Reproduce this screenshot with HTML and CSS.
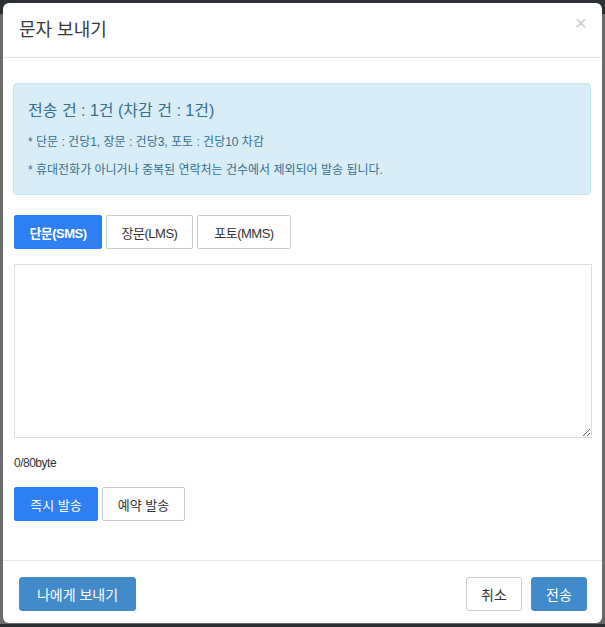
FILE: index.html
```html
<!DOCTYPE html>
<html lang="ko">
<head>
  <meta charset="UTF-8">
  <meta name="viewport" content="width=device-width, initial-scale=1.0">
  <title>문자 보내기</title>
  <link rel="stylesheet" href="styles.css">
</head>
<body>
  <div class="modal">
    <div class="modal-header">
      <h4 class="modal-title">문자 보내기</h4>
      <button type="button" class="close">&times;</button>
    </div>

    <div class="modal-body">
      <div class="alert">
        <p class="alert-title">전송 건 : 1건 (차감 건 : 1건)</p>
        <p>* 단문 : 건당1, 장문 : 건당3, 포토 : 건당10 차감</p>
        <p>* 휴대전화가 아니거나 중복된 연락처는 건수에서 제외되어 발송 됩니다.</p>
      </div>

      <div class="tabs">
        <button type="button" class="btn btn-tab active">단문(SMS)</button>
        <button type="button" class="btn btn-tab">장문(LMS)</button>
        <button type="button" class="btn btn-tab">포토(MMS)</button>
      </div>

      <textarea id="message"></textarea>
      <div class="counter"><span id="bytes">0</span>/80byte</div>

      <div class="send-type">
        <button type="button" class="btn btn-blue">즉시 발송</button>
        <button type="button" class="btn btn-white">예약 발송</button>
      </div>
    </div>

    <div class="modal-footer">
      <button type="button" class="btn btn-primary btn-me">나에게 보내기</button>
      <div class="footer-right">
        <button type="button" class="btn btn-default">취소</button>
        <button type="button" class="btn btn-primary">전송</button>
      </div>
    </div>
  </div>

  <script>
    // count bytes of message (korean = 2 bytes)
    document.getElementById('message').addEventListener('keyup', function() {
      let bytes = 0;
      for (let i = 0; i < this.value.length; i++) {
        bytes += this.value.charCodeAt(i) > 127 ? 2 : 1;
      }
      document.getElementById('bytes').textContent = bytes;
    });
  </script>
</body>
</html>
```

FILE: styles.css
```css
/* Modal page */
body {
  margin: 0;
  padding: 3px 3px 0 3px;
  font-family: "Liberation Sans", "Noto Sans CJK KR", sans-serif;
  font-size: 12px;
  color: #333;
  background: linear-gradient(#2c3035 0, #2c3035 14px, #6b6b6b 14px);
  min-height: 624px;
  box-sizing: border-box;
}
.modal {
  background-color: #fff;
  border-radius: 6px;
  height: 620px;
  display: flex;
  flex-direction: column;
}
.modal-header {
  display: flex;
  justify-content: space-between;
  align-items: flex-start;
  padding: 15px 15px 15px 16px;
  height: 24px;
  border-bottom: 1px solid #e5e5e5;
}
.modal-title {
  margin: 0;
  font-size: 18px;
  font-weight: normal;
  line-height: 24px;
  color: #3a3a3a;
}
.close {
  border: none;
  background: none;
  padding: 0;
  margin-top: -7px;
  font-size: 21px;
  line-height: 24px;
  color: #ccc;
  cursor: pointer;
  font-family: "Liberation Sans", sans-serif;
}
.modal-body {
  flex: 1;
  padding: 25px 11px 0 10px;
}
.alert {
  background-color: #d9edf7;
  border: 1px solid #bce8f1;
  border-radius: 4px;
  color: #31708f;
  padding: 16px 14px 10px 14px;
}
.alert p {
  margin: 0;
  font-size: 12px;
  line-height: 28px;
}
.alert .alert-title {
  font-size: 16px;
  line-height: 22px;
  margin-bottom: 6px;
}
.btn {
  font-family: "Liberation Sans", "Noto Sans CJK KR", sans-serif;
  font-size: 13px;
  height: 34px;
  border-radius: 2px;
  cursor: pointer;
  padding: 0 12px;
}
.tabs {
  display: flex;
  gap: 4px;
  margin-top: 20px;
  padding-left: 1px;
}
.btn-tab {
  width: 88px;
  background-color: #fff;
  border: 1px solid #ccc;
  color: #333;
  letter-spacing: -0.5px;
}
.btn-tab:nth-child(2) {
  width: 87px;
}
.btn-tab:last-child {
  width: 94px;
}
.btn-tab.active {
  background-color: #2d7ff3;
  border-color: #2d7ff3;
  color: #fff;
  font-weight: bold;
}
textarea {
  display: block;
  width: 578px;
  height: 174px;
  margin: 15px 0 0 1px;
  border: 1px solid #ddd;
  box-sizing: border-box;
  resize: both;
}
.counter {
  margin-top: 18px;
  padding-left: 1px;
  letter-spacing: -0.5px;
  color: #333;
}
.send-type {
  display: flex;
  gap: 4px;
  margin-top: 17px;
  padding-left: 1px;
}
.btn-blue {
  width: 84px;
  background-color: #2d7ff3;
  border: 1px solid #2d7ff3;
  color: #fff;
}
.btn-white {
  width: 83px;
  background-color: #fff;
  border: 1px solid #ccc;
  color: #333;
}
.modal-footer {
  display: flex;
  justify-content: space-between;
  padding: 16px 15px 12px 16px;
  border-top: 1px solid #e5e5e5;
}
.footer-right {
  display: flex;
  gap: 9px;
}
.btn-primary {
  width: 56px;
  background-color: #428bca;
  border: 1px solid #428bca;
  color: #fff;
  font-size: 14px;
  border-radius: 3px;
  padding: 0;
}
.btn-primary.btn-me {
  width: 117px;
}
.btn-default {
  width: 56px;
  background-color: #fff;
  border: 1px solid #ccc;
  color: #333;
  font-size: 14px;
  border-radius: 3px;
  padding: 0;
}
```
